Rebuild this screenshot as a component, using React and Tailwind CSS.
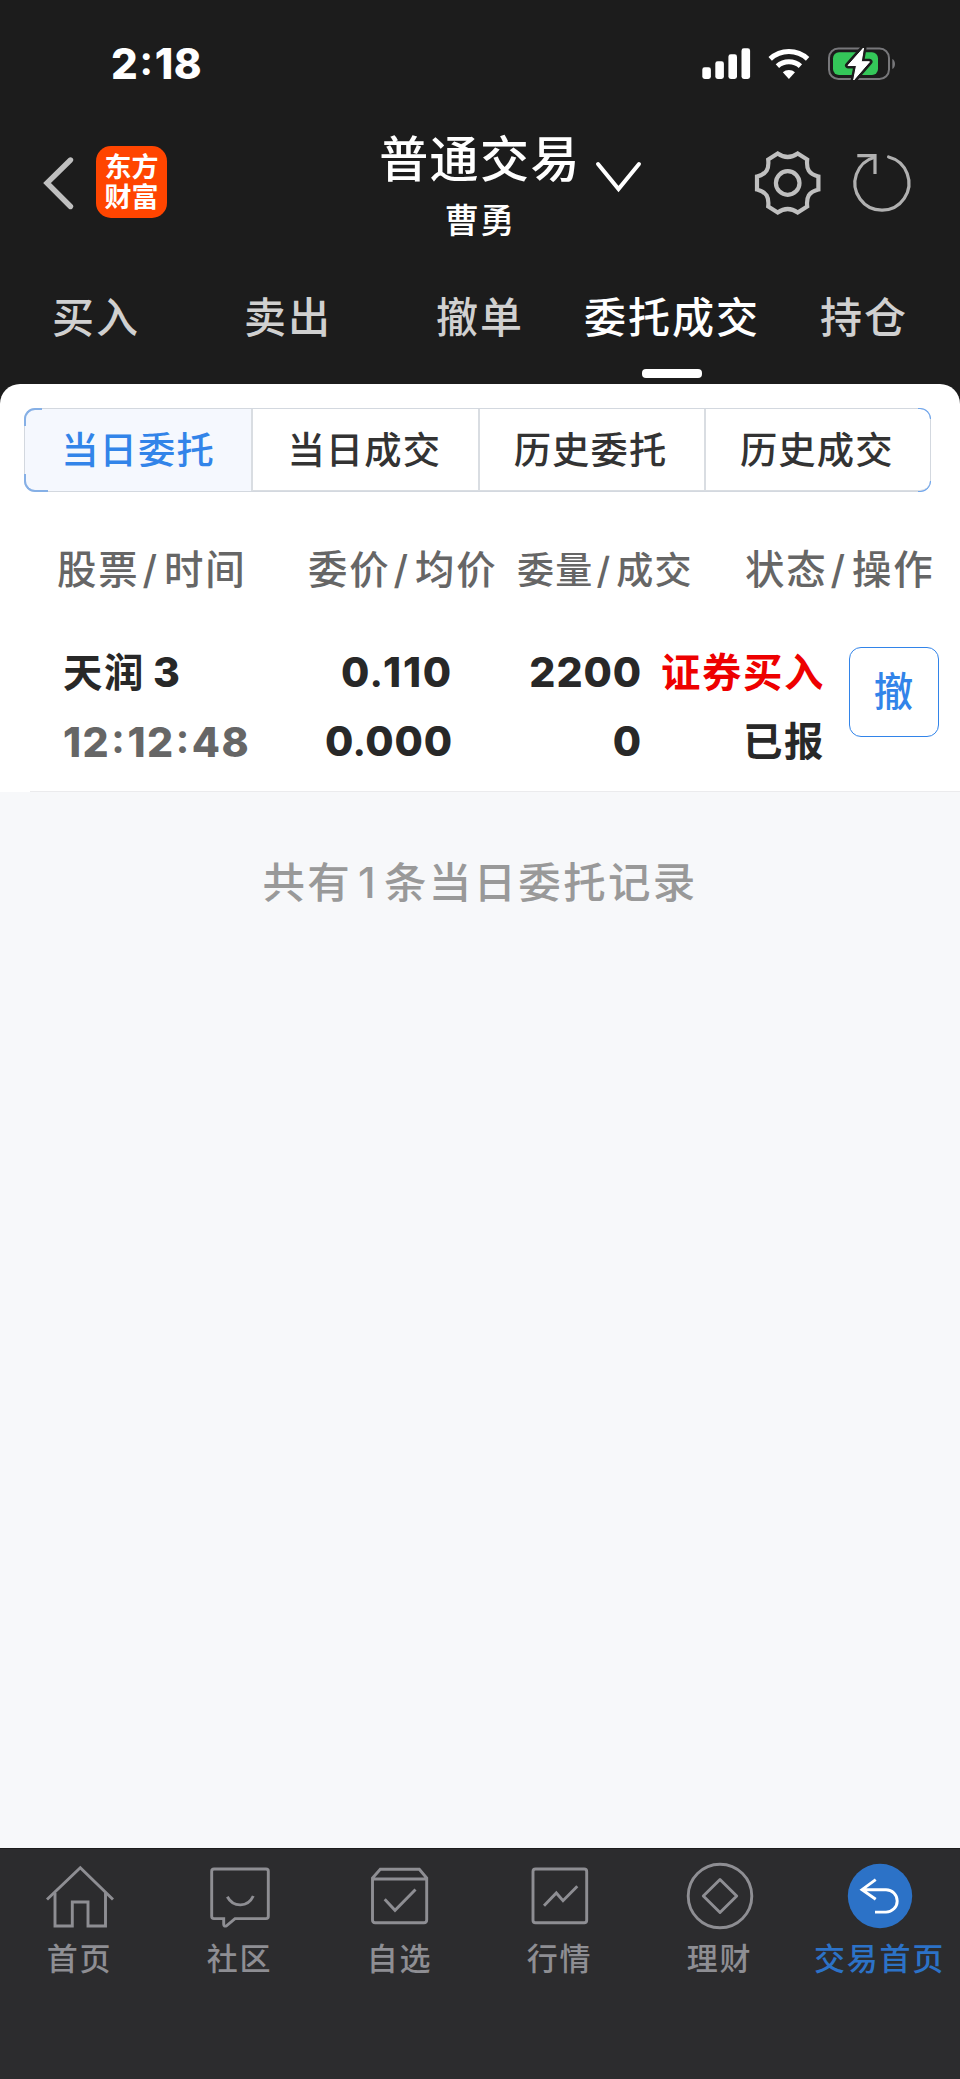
const TABS = ['买入', '卖出', '撤单', '委托成交', '持仓'];
const SEGMENTS = ['当日委托', '当日成交', '历史委托', '历史成交'];

function Slash() {
  return <span className="pl-[3px] pr-[5px]">/</span>;
}

// Round punctuation dots between the digits.
function Colon() {
  return <span className="relative -top-[4px] px-[2.500px] font-[Lato] text-[42px] font-black leading-none">:</span>;
}

function Dot() {
  return <span className="font-[Lato] text-[42px] font-black leading-none">.</span>;
}

function StatusBar() {
  return (
    <div className="flex h-[128px] items-center pl-[111px]">
      <span className="w-[591px] whitespace-nowrap text-[42px] font-extrabold leading-[60px] tracking-[0.5px] text-white">2<Colon />18</span>
      <svg className="h-[34px] w-[194px]" viewBox="702 47 194 34">
        <g fill="#fff">
          <rect x="702.3" y="67.3" width="8.6" height="11.7" rx="2.4" />
          <rect x="715.3" y="61.3" width="8.6" height="17.7" rx="2.4" />
          <rect x="728.4" y="54.3" width="8.6" height="24.7" rx="2.4" />
          <rect x="741.5" y="48.3" width="8.6" height="30.7" rx="2.4" />
        </g>
        <g fill="none" stroke="#fff" strokeWidth="5">
          <path d="M770.2 58.8a27.5 27.5 0 0 1 37.4 0" />
          <path d="M777.4 66.1a17.2 17.2 0 0 1 23 0" />
        </g>
        <path fill="#fff" d="M782.8 72.3a9.2 9.2 0 0 1 12.2 0L788.9 79z" />
        <rect x="829" y="48.500" width="60" height="30.500" rx="9.500" fill="none" stroke="#77777a" strokeWidth="2" />
        <path d="M892.300 59v10c3.600-1.600 3.600-8.400 0-10z" fill="#77777a" />
        <rect x="833" y="52.300" width="45" height="22.700" rx="6" fill="#34c759" />
        <path d="M863.5 48L848 65.500h8.500L853.700 80 869.500 61.800h-8.300z" fill="#fff" stroke="#1c1c1c" strokeWidth="6" strokeLinejoin="round" paintOrder="stroke" />
        <path d="M863.5 48L848 65.500h8.500L853.700 80 869.500 61.800h-8.300z" fill="#fff" stroke="#fff" strokeWidth="1" strokeLinejoin="round" />
      </svg>
    </div>
  );
}

function NavBar() {
  return (
    <div className="flex h-[124px] items-start">
      <svg className="ml-[40px] mt-[24px] h-[60px] w-[40px]" viewBox="40 152 40 60" fill="none" stroke="#bfbfbf" strokeWidth="5.4" strokeLinecap="round">
        <path d="M70.500 160L47 183l23.500 23.500" />
      </svg>
      <div className="ml-[16px] mt-[18px] flex h-[72px] w-[71px] flex-col items-center justify-center rounded-[15px] bg-[#ff4500] pt-[2px] text-[27px] font-bold leading-[30px] text-white">
        <span>东方</span>
        <span>财富</span>
      </div>
      <div className="ml-[193px] flex w-[240px] flex-col items-center pt-[2px] text-white">
        <span className="text-[49px] font-medium leading-[60px] tracking-[1.400px]">普通交易</span>
        <span className="text-[34.500px] font-medium leading-[62px] tracking-[1px]">曹勇</span>
      </div>
      <svg className="-ml-[6px] mt-[30px] h-[38px] w-[50px]" viewBox="594 158 50 38" fill="none" stroke="#fff" strokeWidth="4" strokeLinecap="round">
        <path d="M598 164l20.500 25 20.500-25" />
      </svg>
      <svg className="ml-[109px] mt-[20px] h-[70px] w-[70px]" viewBox="753 148 70 70" fill="none" stroke="#bfbfbf" strokeWidth="4.200">
        <g transform="translate(787.7 183)">
          <circle r="11.800" />
          <path d="M-10 -29.500Q0 -22.500 10 -29.500L19.500 -23.500C18.500 -14 21 -9 30.700 -6.500V6.500C21 9 18.500 14 19.500 23.500L10 29.500Q0 22.500 -10 29.500L-19.500 23.500C-18.500 14 -21 9 -30.700 6.500V-6.500C-21 -9 -18.500 -14 -19.500 -23.500Z" />
        </g>
      </svg>
      <svg className="ml-[27px] mt-[22px] h-[66px] w-[66px]" viewBox="850 150 66 66" fill="none" stroke="#b0b0b0" strokeWidth="3.200">
        <path d="M888.600 157A27 27 0 1 1 874.500 157.200" strokeLinecap="round" />
        <path d="M857.300 155.700h17.700v18.300" />
      </svg>
    </div>
  );
}

function Tabs() {
  return (
    <div className="grid h-[132px] grid-cols-5">
      {TABS.map((t) => (
        <div key={t} className="flex flex-col items-center pt-[36px]">
          <span className={'whitespace-nowrap text-[42px] font-medium leading-[60px] tracking-[2px] ' + (t === '委托成交' ? 'text-white' : 'text-[#d0d0d0]')}>{t}</span>
          {t === '委托成交' && <span className="mt-[21px] h-[9px] w-[60px] rounded-[4px] bg-white" />}
        </div>
      ))}
    </div>
  );
}

function Segments() {
  return (
    <div className="relative ml-[24px] grid h-[84px] w-[907px] grid-cols-4 rounded-[11px] border border-[#d3d8df]">
      {SEGMENTS.map((s, i) => (
        <div
          key={s}
          className={
            'flex items-center justify-center pt-[2px] text-[37.300px] font-medium tracking-[1.200px] ' +
            (i === 0 ? 'rounded-l-[10px] bg-[#f5f8fe] text-[#3284e9]' : 'border-b border-l-2 border-[#d9dde2] pr-[2px] text-[#333333]') +
            (i === 3 ? ' rounded-br-[10px]' : '')
          }
        >
          {s}
        </div>
      ))}
      <span className="absolute -left-px -top-px h-[18px] w-[18px] rounded-tl-[11px] border-l-2 border-t-2 border-[#86b0e6]" />
      <span className="absolute -bottom-px -left-px h-[18px] w-[24px] rounded-bl-[11px] border-b-2 border-l-2 border-[#86b0e6]" />
      <span className="absolute -right-px -top-px h-[11px] w-[13px] rounded-tr-[11px] border-r-[1.500px] border-t-[1.500px] border-[#6fa6ee]" />
      <span className="absolute -bottom-px -right-px h-[11px] w-[13px] rounded-br-[11px] border-b-[1.500px] border-r-[1.500px] border-[#6fa6ee]" />
    </div>
  );
}

function Orders() {
  return (
    <>
      <div className="flex h-[155px] items-center whitespace-nowrap text-[39.400px] font-medium leading-[60px] tracking-[1.900px] text-[#666666]">
        <span className="ml-[57px] w-[251px]">股票<Slash />时间</span>
        <span className="w-[209px]">委价<Slash />均价</span>
        <span className="w-[228px] pt-[2px] text-[37px] tracking-[1.200px]">委量<Slash />成交</span>
        <span>状态<Slash />操作</span>
      </div>
      <div className="ml-[30px] flex h-[145px] border-b border-[#ebebed] pl-[33px] text-[39.400px] font-bold leading-[50px] text-[#282828]">
        <div className="flex w-[200px] flex-col gap-[19px] whitespace-nowrap tracking-[1.600px]">
          <span>天润<span className="ml-[8px] text-[41px] font-extrabold">3</span></span>
          <span className="text-[41px] font-extrabold tracking-[1.400px] text-[#666666]">12<Colon />12<Colon />48</span>
        </div>
        <div className="flex w-[190px] flex-col gap-[19px] text-right text-[41px] font-extrabold tracking-[0.900px]">
          <span className="tracking-[1.800px]">0<Dot />110</span>
          <span>0<Dot />000</span>
        </div>
        <div className="flex w-[189px] flex-col gap-[19px] text-right text-[41px] font-extrabold tracking-[0.900px]">
          <span>2200</span>
          <span>0</span>
        </div>
        <div className="flex w-[183px] flex-col gap-[19px] pt-px text-right tracking-[1.600px]">
          <span className="text-[#ee0000]">证券买入</span>
          <span>已报</span>
        </div>
        <button className="ml-[24px] h-[90px] w-[90px] rounded-[12px] border border-[#3284e9] pr-px text-[39.400px] font-medium text-[#3284e9]">撤</button>
      </div>
    </>
  );
}

function NavItem({ label, active, children }) {
  return (
    <div className="flex flex-col items-center">
      <svg className="h-[80px] w-[80px]" viewBox="0 0 80 80" fill="none" stroke="#8e8e93" strokeWidth="2.900">
        {children}
      </svg>
      <span className={'mt-[4px] -ml-px whitespace-nowrap text-[31px] font-medium leading-[40px] tracking-[1.800px] ' + (active ? 'text-[#2c72c7]' : 'text-[#8e8e93]')}>{label}</span>
    </div>
  );
}

function BottomBar() {
  return (
    <div className="grid h-[231px] grid-cols-6 border-t border-[#1c1c1c] bg-[#2c2c2e] pt-[6px]">
      <NavItem label="首页">
        <path d="M7 44.500L40.300 12.700l32.700 31.800" />
        <path d="M15 38v33h17.300V47H48v24h17.500V38" />
      </NavItem>
      <NavItem label="社区">
        <path d="M14 14h52q2.300 0 2.300 2.300v45q0 2.300-2.300 2.300H35l-8.500 7.200q-2.800 1-2.800-1.500v-5.700H14q-2.300 0-2.300-2.300v-45Q11.700 14 14 14z" />
        <path d="M27.300 41.700c6 11 20.500 11 26-0.700" />
      </NavItem>
      <NavItem label="自选">
        <path d="M12.500 24h54.200v41q0 2.700-2.700 2.700H15.200q-2.700 0-2.700-2.700V23l7.800-8.700h39l7.400 8.700v1" />
        <path d="M24.700 44.300L35 55.300l20.500-20.800" />
      </NavItem>
      <NavItem label="行情">
        <rect x="13" y="14" width="53.700" height="53.700" rx="2.500" />
        <path d="M24 50.700L36.300 38l6.700 7.700 14.300-14.500" />
      </NavItem>
      <NavItem label="理财">
        <circle cx="40" cy="41" r="31.800" />
        <path d="M40 24.500L56.700 41 40 57.500 23.300 41z" strokeLinejoin="round" />
      </NavItem>
      <NavItem label="交易首页" active>
        <circle cx="40" cy="41" r="32.200" fill="#2c72c7" stroke="none" />
        <path d="M35.700 24.700L22 34.700l13.700 9.600M22 34.700h24a11.200 11.200 0 0 1 0 22.400H35" stroke="#fff" />
      </NavItem>
    </div>
  );
}

export default function App() {
  return (
    <div className="flex h-[2079px] w-[960px] flex-col overflow-hidden bg-[#f7f8fa] font-[Inter,'Noto_Sans_CJK_SC',sans-serif]">
      <header className="bg-[#1c1c1c]">
        <StatusBar />
        <NavBar />
        <Tabs />
      </header>
      <div className="bg-[#1c1c1c]">
        <main className="rounded-t-[20px] bg-white pt-[24px]">
          <Segments />
          <Orders />
        </main>
      </div>
      <p className="flex-1 pt-[61px] text-center text-[42.500px] font-medium leading-[60px] tracking-[2.300px] text-[#999999]">
        共有<span className="px-[6px]">1</span>条当日委托记录
      </p>
      <BottomBar />
    </div>
  );
}
